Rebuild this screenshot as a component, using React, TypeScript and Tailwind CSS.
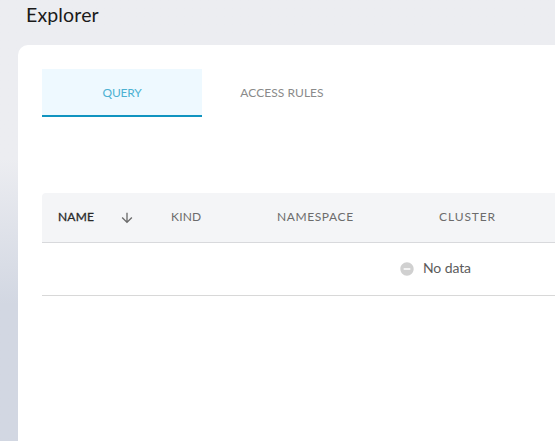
const tabs = [
  { label: "QUERY", active: true },
  { label: "ACCESS RULES", active: false },
];

function SortArrow() {
  return (
    <svg viewBox="0 0 24 24" className="size-4" fill="#6b6b6b">
      <path d="M20 12l-1.41-1.41L13 16.17V4h-2v12.17l-5.58-5.59L4 12l8 8 8-8z" />
    </svg>
  );
}

function EmptyIcon() {
  return (
    <svg viewBox="0 0 24 24" className="size-4" fill="#d0d0d0">
      <path d="M12 2C6.48 2 2 6.48 2 12s4.48 10 10 10 10-4.48 10-10S17.52 2 12 2zm5 11H7v-2h10v2z" />
    </svg>
  );
}

export default function App() {
  return (
    <div className="flex h-[441px] w-[555px] flex-col overflow-hidden bg-linear-to-b from-[#ecedf1] from-[36%] to-[#d2d7e2] to-[69%] pl-[18px] font-['Lato',sans-serif]">
      <h1 className="h-[45px] shrink-0 pt-0.5 pl-2 text-[19.5px] leading-[26px] tracking-[0.15px] text-[#1a1a1a]">
        Explorer
      </h1>
      <main className="flex-1 rounded-tl-[10px] bg-white pt-6 pl-6">
        <nav className="flex h-12 text-xs">
          {tabs.map((tab) => (
            <button
              key={tab.label}
              className={
                tab.active
                  ? "w-40 border-b-2 border-[#1094c0] bg-[#eef9ff] pt-0.5 tracking-[-0.25px] text-[#4cb1d2]"
                  : "w-40 border-b-2 border-transparent pt-0.5 tracking-[0.05px] text-[#8a8a8a]"
              }
            >
              {tab.label}
            </button>
          ))}
        </nav>
        <section className="mt-[76px]">
          <div className="grid h-[50px] grid-cols-[113px_106px_162px_1fr] items-center rounded-tl border-b border-[#d8d9dc] bg-[#f4f5f7] text-xs tracking-[0.6px] text-[#6c6c6c] *:pl-4">
            <div className="flex items-center justify-between pr-5 text-[#2a2a2a]">
              <span className="-mt-0.5 tracking-[0.2px] [-webkit-text-stroke:0.3px_#2a2a2a]">NAME</span>
              <SortArrow />
            </div>
            <div className="-mt-0.5 tracking-[0.2px]">KIND</div>
            <div className="-mt-0.5">NAMESPACE</div>
            <div className="-mt-0.5 tracking-[0.9px]">CLUSTER</div>
          </div>
          <div className="flex h-[53px] items-center gap-2 border-b border-[#d8d8d8] pl-[357px] text-sm text-[#5c5c5c]">
            <EmptyIcon />
            <span className="-mt-0.5 tracking-[-0.1px]">No data</span>
          </div>
        </section>
      </main>
    </div>
  );
}
